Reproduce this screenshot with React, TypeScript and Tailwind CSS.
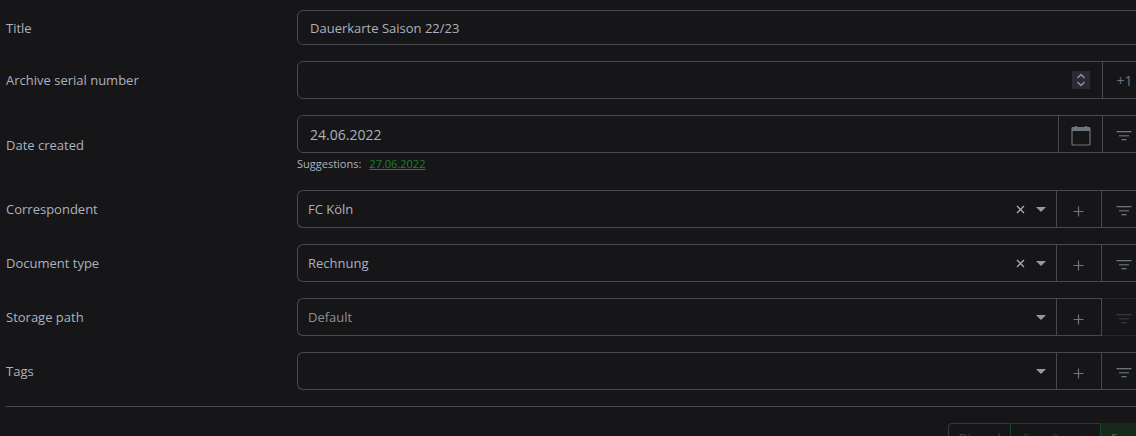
import type { ReactNode } from 'react'

const INPUT = 'min-w-0 flex-1 bg-transparent px-3 text-[#abb2bf] outline-none'
const ADDON = 'flex shrink-0 items-center justify-center border-l border-[#47494e] text-[#6c757d]'

function Row({ id, label, children }: { id: string; label: string; children: ReactNode }) {
  return (
    <div className="mb-4 flex items-center">
      <label htmlFor={id} className="w-[291px] shrink-0 pt-px">{label}</label>
      <div className="min-w-0 flex-1">{children}</div>
    </div>
  )
}

function Group({ children }: { children: ReactNode }) {
  return <div className="flex h-[38px] rounded-md border border-[#47494e]">{children}</div>
}

function FilterIcon() {
  return (
    <svg width="16" height="12" viewBox="0 0 16 12" fill="currentColor" aria-hidden="true">
      <rect x="0.5" y="1" width="15" height="1.3" />
      <rect x="3" y="5" width="10" height="1.5" opacity="0.75" />
      <rect x="5.5" y="9" width="5" height="1.3" />
    </svg>
  )
}

function PlusIcon() {
  return (
    <svg width="11" height="11" viewBox="0 0 11 11" stroke="currentColor" strokeWidth="1.2" className="mt-1" aria-hidden="true">
      <path d="M5.5 0.5v10M0.5 5.5h10" />
    </svg>
  )
}

function CalendarIcon() {
  return (
    <svg width="20" height="20" viewBox="0 0 20 20" className="mt-1" aria-hidden="true">
      <path d="M4 0h2v2H4zM14 0h2v2h-2zM1 1h18v4H1z" fill="currentColor" />
      <rect x="1" y="1.5" width="18" height="17.5" rx="1" fill="none" stroke="currentColor" strokeWidth="1.2" />
    </svg>
  )
}

type SelectRowProps = {
  id: string
  label: string
  value: string
  clearable?: boolean
  muted?: boolean
}

function SelectRow({ id, label, value, clearable = false, muted = false }: SelectRowProps) {
  return (
    <Row id={id} label={label}>
      <div className="flex h-[38px]">
        <div className="flex min-w-0 flex-1 items-center rounded-l-md border border-r-0 border-[#47494e] pr-[10px]">
          <select
            id={id}
            defaultValue={value}
            className={`h-full min-w-0 flex-1 appearance-none bg-transparent pl-[10px] outline-none ${muted ? 'text-[#8f9094]' : 'text-[#abb2bf]'}`}
          >
            <option>{value}</option>
          </select>
          {clearable && (
            <button type="button" aria-label={`Clear ${label}`} className="mr-[11px] text-[#abb2bf]">
              <svg width="9" height="9" viewBox="0 0 9 9" stroke="currentColor" strokeWidth="1.2" aria-hidden="true">
                <path d="M1 1l7 7M8 1l-7 7" />
              </svg>
            </button>
          )}
          <svg width="10" height="5" viewBox="0 0 10 5" fill="#999" aria-hidden="true">
            <path d="M0 0h10L5 5z" />
          </svg>
        </div>
        <button type="button" aria-label={`Add ${label}`} className={`${ADDON} w-[45px] border-y pr-px`}>
          <PlusIcon />
        </button>
        <div className="flex border-l border-[#47494e]">
          <button
            type="button"
            disabled={muted}
            aria-label={`Filter by ${label}`}
            className="flex w-[45px] items-center justify-center border-y border-[#47494e] pt-1 pr-0.5 text-[#6c757d] disabled:opacity-35"
          >
            <FilterIcon />
          </button>
        </div>
      </div>
    </Row>
  )
}

export default function App() {
  return (
    <div className="h-screen overflow-hidden bg-[#161618] font-['Open_Sans','Noto_Sans',sans-serif] text-[13px] leading-[21px] text-[#abb2bf]">
      <form className="-mr-[11px] pl-[6px] pt-[10px]">
        <Row id="title" label="Title">
          <div className="flex h-[35px] rounded-md border border-[#47494e]">
            <input id="title" type="text" defaultValue="Dauerkarte Saison 22/23" className={`${INPUT} pt-px`} />
          </div>
        </Row>

        <Row id="asn" label="Archive serial number">
          <Group>
            <input id="asn" type="text" inputMode="numeric" className={INPUT} />
            <span className="mr-3 flex h-[18px] w-[18px] shrink-0 items-center justify-center self-center bg-[#2b2a33] text-[#8f8f9d]">
              <svg width="10" height="14" viewBox="0 0 10 14" fill="none" stroke="currentColor" strokeWidth="1.5" aria-hidden="true">
                <path d="M1.5 5L5 1.5 8.5 5M1.5 9L5 12.5 8.5 9" />
              </svg>
            </span>
            <button type="button" className={`${ADDON} w-[44px] text-[14px]`}>+1</button>
          </Group>
        </Row>

        <Row id="created" label="Date created">
          <Group>
            <input id="created" type="text" defaultValue="24.06.2022" className={`${INPUT} text-[14px]`} />
            <button type="button" aria-label="Pick a date" className={`${ADDON} w-[44px]`}>
              <CalendarIcon />
            </button>
            <button type="button" aria-label="Filter by date" className={`${ADDON} w-[44px] pt-1 pr-px`}>
              <FilterIcon />
            </button>
          </Group>
          <div className="flex gap-2 pt-px text-[11px] leading-[20px]">
            <span>Suggestions:</span>
            <a href="#created" className="text-[#1f7f2c] underline">27.06.2022</a>
          </div>
        </Row>

        <SelectRow id="correspondent" label="Correspondent" value="FC Köln" clearable />
        <SelectRow id="type" label="Document type" value="Rechnung" clearable />
        <SelectRow id="path" label="Storage path" value="Default" muted />
        <SelectRow id="tags" label="Tags" value="" />

        <hr className="mb-4 border-[#47494e]" />

        <div className="flex justify-end text-[12px]">
          <button type="button" disabled className="h-[31px] w-[62px] rounded-l border border-r-0 border-[#37393c] text-[#3f4347]">
            Discard
          </button>
          <button type="button" disabled className="h-[31px] w-[91px] border border-[#1b4424] text-[#1b4424]">
            Save &amp; next
          </button>
          <button type="submit" disabled className="h-[31px] w-[46px] rounded-r bg-[#16281b] text-[#5b665e]">
            Save
          </button>
        </div>
      </form>
    </div>
  )
}
